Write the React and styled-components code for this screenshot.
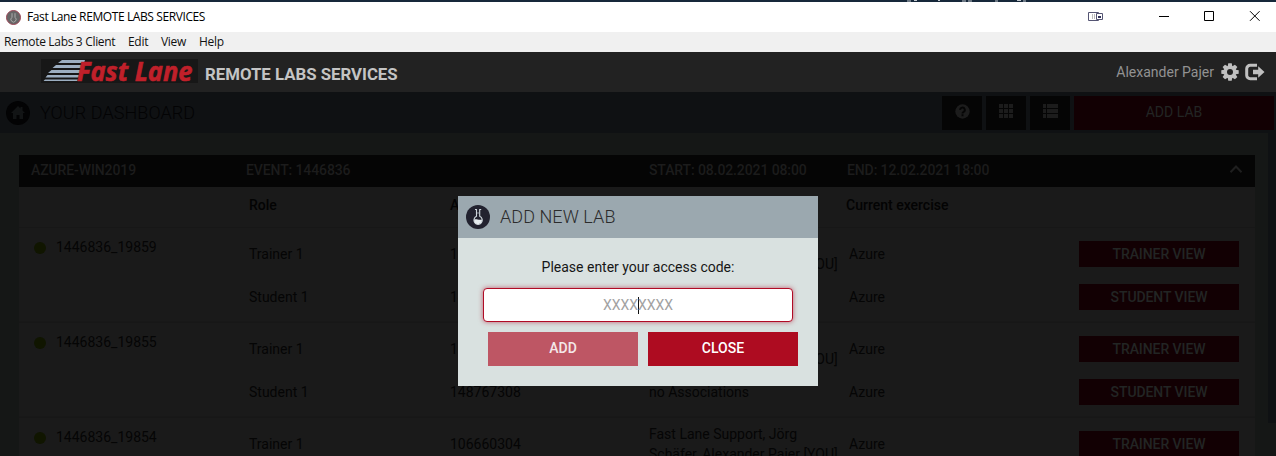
import React from "react";
import styled, { createGlobalStyle, css } from "styled-components";

const GlobalStyle = createGlobalStyle`
  *, *::before, *::after { box-sizing: border-box; }
  body { margin: 0; background: #151716; overflow: hidden; }
  svg { display: block; }
`;

const Window = styled.div`
  position: relative;
  display: flex;
  flex-direction: column;
  width: 1276px;
  height: 456px;
  overflow: hidden;
  background: #151716;
  font-family: Roboto, "Liberation Sans", sans-serif;
  font-size: 14px;
  line-height: 20px;
`;

const DesktopEdge = styled.div`
  flex: 0 0 2px;
  padding-left: 905px;
  background: #16283a;
`;

const TitleBar = styled.div`
  flex: 0 0 30px;
  display: flex;
  align-items: center;
  padding-left: 6px;
  background: #fff;
`;

const WindowTitle = styled.div`
  flex: 1;
  margin-left: 6px;
  font: 12px/16px "Open Sans", "Noto Sans", sans-serif;
  letter-spacing: -0.4px;
  color: #000;
  white-space: nowrap;
`;

const MenuBar = styled.div`
  flex: 0 0 20px;
  display: flex;
  align-items: center;
  padding-left: 4px;
  background: #f0f0f0;
  color: #111;
  font: 12px/18px "Open Sans", "Noto Sans", sans-serif;
`;

const MenuItem = styled.span`
  width: ${(p) => p.$width}px;
  letter-spacing: ${(p) => p.$track || -0.3}px;
  white-space: nowrap;
`;

const Header = styled.header`
  flex: 0 0 40px;
  display: flex;
  align-items: center;
  padding: 0 11px 0 41px;
  background: #222;
`;

const Product = styled.div`
  flex: 1;
  margin: 3px 0 0 7px;
  font-size: 16.8px;
  font-weight: 700;
  color: #c4c4c4;
`;

const UserName = styled.span`
  margin-right: 7px;
  color: #929292;
`;

const DashBar = styled.div`
  flex: 0 0 41px;
  display: flex;
  align-items: flex-start;
  gap: 4px;
  padding: 4px 2px 0 6px;
  background: #0f1113;
`;

const DashTitle = styled.div`
  flex: 1;
  margin: 7px 0 0 6px;
  font-size: 18px;
  font-weight: 300;
  letter-spacing: 0.07px;
  color: #030304;
`;

const HomeBadge = styled.div`
  margin-top: 5px;
`;

const SquareButton = styled.div`
  display: flex;
  align-items: center;
  justify-content: center;
  width: 40px;
  height: 34px;
  padding-bottom: 4px;
  background: #050505;
`;

const redButton = css`
  display: flex;
  align-items: center;
  justify-content: center;
  background: #120003;
  color: #222524;
  font-weight: 500;
`;

const AddLabButton = styled.div`
  ${redButton}
  width: 200px;
  height: 34px;
  padding-bottom: 2px;
  font-weight: 400;
`;

const Scroller = styled.div`
  flex: 1;
  min-height: 0;
  display: flex;
  justify-content: space-between;
  overflow: hidden;
`;

const ScrollThumb = styled.div`
  width: 8px;
  height: 290px;
  background: #0f1113;
`;

const Card = styled.section`
  width: 1236px;
  margin: 22px 0 0 19px;
  background: #1a1a1a;
`;

const CardHead = styled.div`
  display: grid;
  grid-template-columns: 215px 403px 198px 1fr 16px;
  align-items: center;
  height: 32px;
  padding: 0 11px 2px 12px;
  background: #050505;
  color: #1c1c1c;
  font-weight: 500;
  letter-spacing: -0.11px;
`;

const columns = "230px 201px 199px 197px 1fr";

const ColumnHeads = styled.div`
  display: grid;
  grid-template-columns: ${columns};
  height: 40px;
  padding-top: 8px;
  color: #030303;
  font-weight: 500;
`;

const Group = styled.div`
  display: grid;
  grid-template-columns: 230px 1fr;
  height: 95px;
  padding-top: 5px;
  box-shadow: inset 0 1px #171717, inset 0 -1px #181818;
  color: #050505;
  font-weight: 400;
`;

const LabId = styled.div`
  display: flex;
  align-items: center;
  gap: 10px;
  height: 20px;
  margin: 5px 0 0 15px;
`;

const StatusDot = styled.span`
  width: 12px;
  height: 12px;
  margin-top: 1px;
  border-radius: 50%;
  background: #101500;
`;

const SeatRow = styled.div`
  display: grid;
  grid-template-columns: 201px 199px 200px 230px 160px;
  align-items: center;
  height: 43px;
`;

const Names = styled.div`
  width: 198px;
`;

const ViewButton = styled.div`
  ${redButton}
  height: 26px;
  padding-bottom: 1px;
  margin-top: 1px;
  letter-spacing: -0.08px;
`;

const Dialog = styled.div`
  position: absolute;
  left: 458px;
  top: 196px;
  width: 360px;
  height: 190px;
  background: #d9e1e0;
`;

const DialogHead = styled.div`
  display: flex;
  align-items: center;
  gap: 10px;
  height: 42px;
  padding-left: 8px;
  background: #9ba8af;
  color: #2c2c2c;
  font-size: 18px;
  font-weight: 300;
  letter-spacing: 0.07px;
`;

const DialogBody = styled.div`
  display: flex;
  flex-direction: column;
  align-items: center;
  padding-top: 19px;
  color: #161616;
`;

const CodeField = styled.div`
  display: flex;
  align-items: center;
  justify-content: center;
  width: 310px;
  height: 34px;
  margin-top: 11px;
  border: 1px solid #b00c26;
  border-radius: 4px;
  box-shadow: 0 0 5px rgba(176, 12, 38, 0.6);
  background: #fff;
  color: #a2a2a2;
`;

const Caret = styled.span`
  width: 1px;
  height: 17px;
  margin: 0 -1px 0 0;
  background: #111;
`;

const DialogActions = styled.div`
  display: flex;
  gap: 10px;
  margin: 10px 0 0 10px;
`;

const ActionButton = styled.div`
  display: flex;
  align-items: center;
  justify-content: center;
  width: 150px;
  height: 34px;
  padding-bottom: 2px;
  background: ${(p) => (p.$faded ? "#be5664" : "#ae0c21")};
  color: ${(p) => (p.$faded ? "#f4e8e9" : "#fff")};
  font-weight: 500;
`;

const EdgeMarks = () => (
  <svg width="130" height="2" viewBox="0 0 130 2">
    <path d="M2 1h4M9 .5h3M33 .5h2M57 1h4M63 1h4M90 1h3M112 .5h4M118 1h3" stroke="#c3c9cf" strokeWidth="1" />
  </svg>
);

const AppIcon = () => (
  <svg width="15" height="15" viewBox="0 0 15 15">
    <circle cx="7.5" cy="7.5" r="7" fill="#666" stroke="#9b4656" />
    <path d="M6 3.2v4.1a2.6 2.6 0 1 0 3 0V3.2" fill="none" stroke="#aaa" />
  </svg>
);

const WindowControls = () => (
  <svg width="189" height="30" viewBox="0 0 189 30" fill="none">
    <path d="M1.500 10.500h10v8h-10z" stroke="#555573" />
    <path d="M5.500 12v5M7.500 12v5" stroke="#bbb" />
    <path d="M9.500 11.500h6v6h-6z" fill="#fff" stroke="#555573" />
    <path d="M11 15h3" stroke="#33335a" strokeWidth="2" />
    <path d="M72 14.500h10M117.500 9.500h9v9h-9zM163 9.200l9.600 9.600M172.600 9.200L163 18.800" stroke="#000" />
  </svg>
);

const Logo = () => (
  <svg width="157" height="24" viewBox="0 0 157 24" style={{ marginTop: -2 }}>
    <rect width="157" height="24" fill="#171717" />
    <g fill="#9caec1">
      <path d="M21 1h23l-1 3H17zM15 6h27l-1 3H11.500zM10.500 11h30l-1 3H7zM6.500 16h32l-1 2.500H4.500zM4 20.500h33l-.5 1.500H2.500z" />
    </g>
    <text x="36" y="22" fontFamily="'Open Sans', 'Noto Sans', sans-serif" fontWeight="700" fontStyle="italic" fontSize="27.500" textLength="115.500" lengthAdjust="spacingAndGlyphs" fill="#c0202a" stroke="#c0202a" strokeWidth=".6">
      Fast Lane
    </text>
  </svg>
);

const GearIcon = () => (
  <svg width="18" height="18" viewBox="0 0 18 18">
    <g fill="#c0c0c0">
      {[0, 45, 90, 135].map((a) => (
        <path key={a} d="M7.300.3h3.400l.6 3v11.400l-.6 3H7.300l-.6-3V3.300z" transform={`rotate(${a} 9 9)`} />
      ))}
      <circle cx="9" cy="9" r="6.300" />
    </g>
    <circle cx="9" cy="9" r="3" fill="#222" />
  </svg>
);

const LogoutIcon = () => (
  <svg width="20" height="18" viewBox="0 0 20 18" style={{ marginLeft: 6 }}>
    <path d="M12 2.300H5.200a3.500 3.500 0 0 0-3.500 3.500v6.400a3.500 3.500 0 0 0 3.500 3.500H12" fill="none" stroke="#c0c0c0" strokeWidth="3" />
    <path d="M8 6.800h5.200V3.300L19.500 9l-6.300 5.700v-3.500H8z" fill="#c0c0c0" />
  </svg>
);

const HomeIcon = () => (
  <svg width="24" height="24" viewBox="0 0 24 24">
    <circle cx="12" cy="12" r="12" fill="#030304" />
    <path d="M12 5l-7 7h2v6h3.500v-4h3v4H17v-6h2l-2.500-2.600V6h-2v1.500z" fill="#121415" />
  </svg>
);

const HelpIcon = () => (
  <svg width="15" height="15" viewBox="0 0 15 15">
    <circle cx="7.500" cy="7.500" r="7.200" fill="#1c1c1c" />
    <path d="M5.200 5.900a2.300 2.300 0 1 1 3.500 1.900c-.9.500-1.200.8-1.200 1.600M7.500 10.300v1.900" fill="none" stroke="#050505" strokeWidth="1.900" />
  </svg>
);

const GridIcon = () => (
  <svg width="14" height="14" viewBox="0 0 14 14" fill="#1c1c1c">
    {[0, 5, 10].map((y) => [0, 5, 10].map((x) => <rect key={`${x}-${y}`} x={x} y={y} width="4" height="4" />))}
  </svg>
);

const ListIcon = () => (
  <svg width="15" height="14" viewBox="0 0 15 14" fill="#1c1c1c">
    {[0, 5, 10].map((y) => (
      <path key={y} d={`M0 ${y}h3v4H0zM4 ${y}H15v4H4z`} />
    ))}
  </svg>
);

const ChevronIcon = () => (
  <svg width="16" height="12" viewBox="0 0 16 12">
    <path d="M2.500 8.300L8 2.500l5.500 5.800" fill="none" stroke="#1f1f1f" strokeWidth="2" />
  </svg>
);

const FlaskIcon = () => (
  <svg width="24" height="24" viewBox="0 0 24 24">
    <circle cx="12" cy="12" r="12" fill="#22222f" />
    <path d="M9 4.500h1.500v6.800a4.200 4.200 0 1 0 3.200 0V4.500h1.500" fill="none" stroke="#ced6dc" strokeWidth="1.100" />
    <path d="M8.200 14.500c2-1 4.500 1 7.700 0a4 4 0 0 1-7.700 2z" fill="#e6ecef" />
    <circle cx="12" cy="8" r=".7" fill="#b9c2ca" />
  </svg>
);

const team = "Fast Lane Support, Jörg Schäfer, Alexander Pajer [YOU]";

const labs = [
  { id: "1446836_19859", trainer: "106660301", student: "148767301" },
  { id: "1446836_19855", trainer: "106660302", student: "148767308" },
  { id: "1446836_19854", trainer: "106660304", student: "148767309" },
];

const Seat = ({ role, code, people }) => (
  <SeatRow>
    <span>{role} 1</span>
    <span>{code}</span>
    <Names>{people}</Names>
    <span>Azure</span>
    <ViewButton>{role.toUpperCase()} VIEW</ViewButton>
  </SeatRow>
);

export default function App() {
  return (
    <>
      <GlobalStyle />
      <Window>
        <DesktopEdge><EdgeMarks /></DesktopEdge>
        <TitleBar>
          <AppIcon />
          <WindowTitle>Fast Lane REMOTE LABS SERVICES</WindowTitle>
          <WindowControls />
        </TitleBar>
        <MenuBar>
          <MenuItem $width={124} $track={-0.32}>Remote Labs 3 Client</MenuItem>
          <MenuItem $width={33}>Edit</MenuItem>
          <MenuItem $width={38}>View</MenuItem>
          <MenuItem $width={30}>Help</MenuItem>
        </MenuBar>
        <Header>
          <Logo />
          <Product>REMOTE LABS SERVICES</Product>
          <UserName>Alexander Pajer</UserName>
          <GearIcon />
          <LogoutIcon />
        </Header>
        <DashBar>
          <HomeBadge><HomeIcon /></HomeBadge>
          <DashTitle>YOUR DASHBOARD</DashTitle>
          <SquareButton><HelpIcon /></SquareButton>
          <SquareButton><GridIcon /></SquareButton>
          <SquareButton><ListIcon /></SquareButton>
          <AddLabButton>ADD LAB</AddLabButton>
        </DashBar>
        <Scroller>
          <Card>
            <CardHead>
              <span>AZURE-WIN2019</span>
              <span>EVENT: 1446836</span>
              <span>START: 08.02.2021 08:00</span>
              <span>END: 12.02.2021 18:00</span>
              <ChevronIcon />
            </CardHead>
            <ColumnHeads>
              <span />
              <span>Role</span>
              <span>Access code</span>
              <span>Associations</span>
              <span>Current exercise</span>
            </ColumnHeads>
            {labs.map((lab) => (
              <Group key={lab.id}>
                <LabId>
                  <StatusDot />
                  {lab.id}
                </LabId>
                <div>
                  <Seat role="Trainer" code={lab.trainer} people={team} />
                  <Seat role="Student" code={lab.student} people="no Associations" />
                </div>
              </Group>
            ))}
          </Card>
          <ScrollThumb />
        </Scroller>
        <Dialog>
          <DialogHead>
            <FlaskIcon />
            ADD NEW LAB
          </DialogHead>
          <DialogBody>
            Please enter your access code:
            <CodeField>
              XXXX
              <Caret />
              XXXX
            </CodeField>
            <DialogActions>
              <ActionButton $faded>ADD</ActionButton>
              <ActionButton>CLOSE</ActionButton>
            </DialogActions>
          </DialogBody>
        </Dialog>
      </Window>
    </>
  );
}
